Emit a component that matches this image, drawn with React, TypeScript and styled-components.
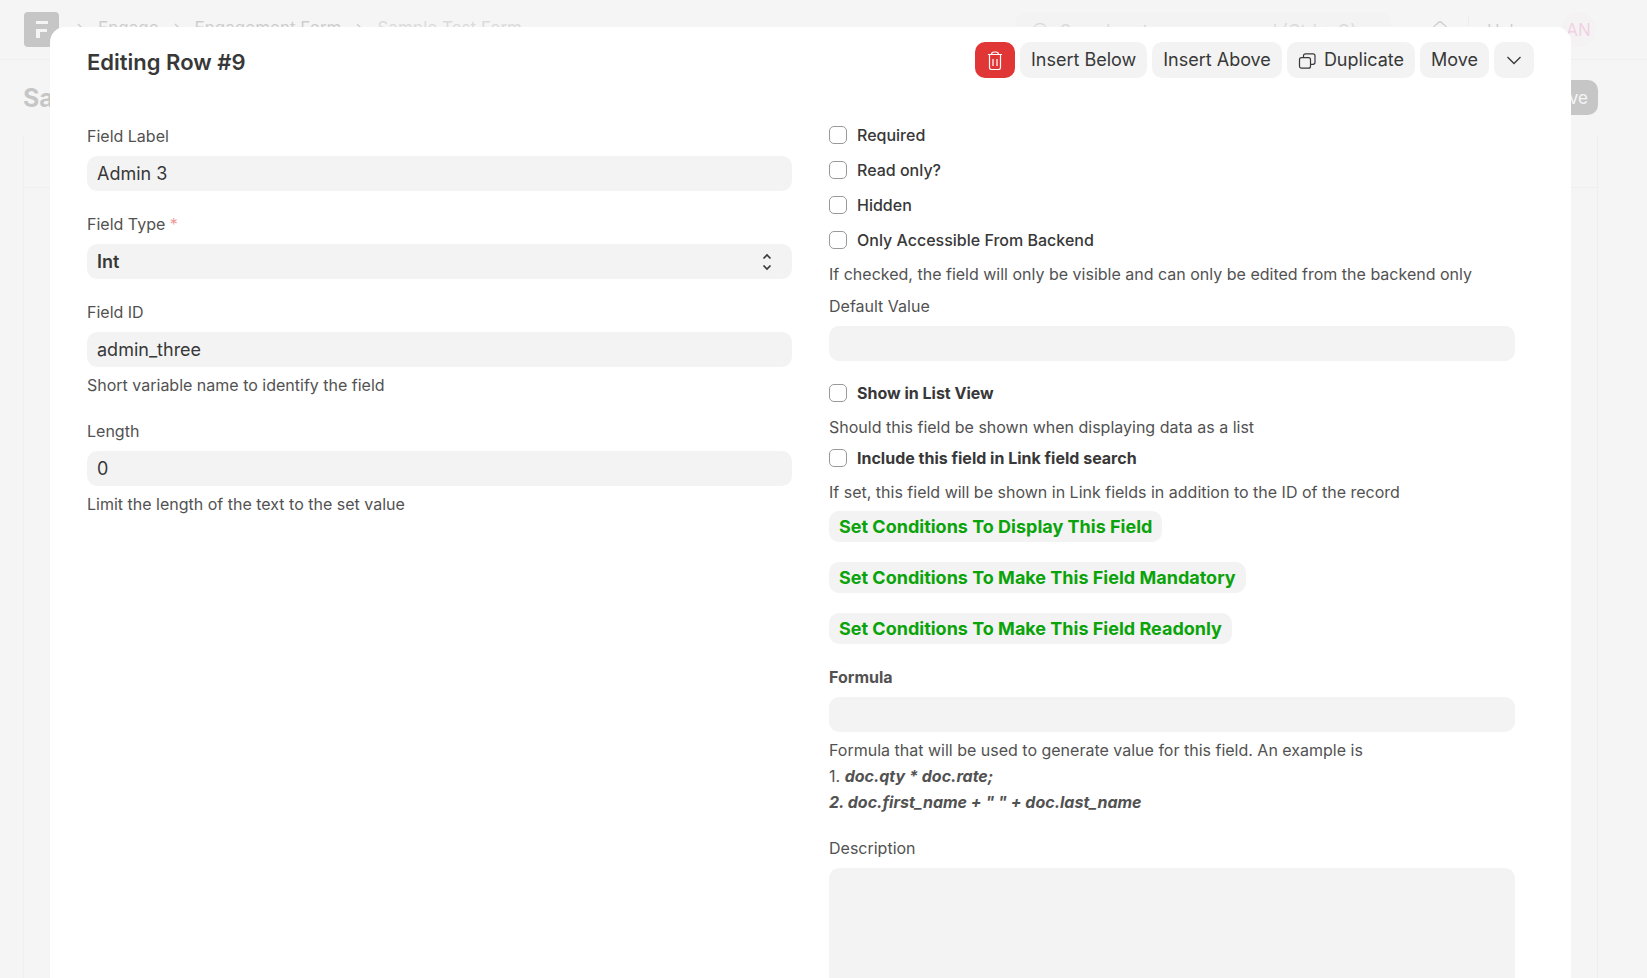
import React, { useState } from "react";
import styled, { createGlobalStyle } from "styled-components";

const GlobalStyle = createGlobalStyle`
  *, *::before, *::after { box-sizing: border-box; }
  html, body, #root { height: 100%; }
  body {
    margin: 0;
    overflow: hidden;
    background: #fff;
    color: #383838;
    font-family: Inter, "Liberation Sans", sans-serif;
    font-size: 16px;
  }
  button, input, select, textarea { font: inherit; color: inherit; }
  h1, h2, p { margin: 0; }
`;

const Desk = styled.div`
  min-height: 100%;
  display: flex;
  flex-direction: column;
`;

const Navbar = styled.header`
  height: 60px;
  padding: 0 51px 0 24px;
  display: flex;
  align-items: center;
  border-bottom: 1px solid #e2e2e2;
`;

const Logo = styled.a`
  display: flex;
  width: 35px;
  height: 35px;
`;

const Crumbs = styled.nav`
  flex: 1;
  display: flex;
  align-items: center;
  gap: 14px;
  padding: 0 0 3px 17px;
  font-size: 17px;
`;

const Crumb = styled.a<{ $current?: boolean }>`
  color: ${(p) => (p.$current ? "#7c7c7c" : "#383838")};
  text-decoration: none;
`;

const Search = styled.label`
  display: flex;
  align-items: center;
  gap: 10px;
  width: 375px;
  height: 35px;
  padding: 2px 16px 0;
  border-radius: 10px;
  background: #f3f3f3;
  color: #7c7c7c;
  font-size: 17px;
  input { flex: 1; min-width: 0; border: 0; padding: 0; background: none; }
  input::placeholder { color: #7c7c7c; opacity: 1; }
`;

const NavTools = styled.div`
  display: flex;
  align-items: center;
  gap: 18px;
  margin-left: 39px;
  font-size: 17px;
`;

const NavDivider = styled.span`
  width: 1px;
  height: 30px;
  background: #d8d8d8;
`;

const NavButton = styled.button`
  display: flex;
  align-items: center;
  gap: 8px;
  padding: 2px 0 0;
  border: 0;
  background: none;
`;

const Avatar = styled.span`
  width: 35px;
  height: 35px;
  border-radius: 50%;
  display: grid;
  place-items: center;
  background: #fcf0f4;
  color: #e34aa6;
  margin-left: 19px;
`;

const PageHead = styled.div`
  height: 75px;
  padding: 0 49px 0 23px;
  display: flex;
  align-items: center;
  justify-content: space-between;
`;

const PageTitle = styled.h1`
  font-size: 25px;
  font-weight: 700;
  color: #171717;
`;

const SaveButton = styled.button`
  height: 35px;
  padding: 0 10px;
  border: 0;
  border-radius: 10px;
  background: #171717;
  color: #fff;
  font-size: 17px;
`;

const PageForm = styled.div`
  flex: 1;
  margin: 0 49px 0 23px;
  border: solid #e2e2e2;
  border-width: 0 1px;
`;

const PageTabs = styled.div`
  height: 53px;
  border-bottom: 1px solid #e2e2e2;
`;

const Backdrop = styled.div`
  position: fixed;
  inset: 0;
  overflow: hidden;
  padding: 27px 76px 0 50px;
  background: rgba(242, 242, 242, 0.8);
`;

const Dialog = styled.section`
  min-height: 100%;
  padding: 15px 37px 37px;
  border-radius: 15px 15px 0 0;
  background: #fff;
`;

const DialogHead = styled.div`
  display: flex;
  justify-content: space-between;
  height: 81px;
`;

const DialogTitle = styled.h2`
  font-size: 22px;
  line-height: 40px;
  font-weight: 600;
`;

const Actions = styled.div`
  display: flex;
  align-items: flex-start;
  gap: 5px;
`;

const ActionButton = styled.button<{ $danger?: boolean; $icon?: boolean }>`
  display: flex;
  align-items: center;
  justify-content: center;
  gap: 6px;
  height: 36px;
  min-width: ${(p) => (p.$icon ? "40px" : "0")};
  padding: ${(p) => (p.$icon ? "0" : "0 11px 2px")};
  border: 0;
  border-radius: 10px;
  white-space: nowrap;
  font-size: 18px;
  background: ${(p) => (p.$danger ? "#e03636" : "#f3f3f3")};
  color: ${(p) => (p.$danger ? "#fff" : "#383838")};
`;

const Columns = styled.form`
  display: grid;
  grid-template-columns: 1fr 1fr;
  column-gap: 37px;
`;

const Column = styled.div<{ $inset?: boolean }>`
  min-width: 0;
  padding-right: ${(p) => (p.$inset ? "19px" : "0")};
`;

const Field = styled.div`
  display: flex;
  flex-direction: column;
  margin-bottom: 20px;
`;

const Label = styled.label<{ $bold?: boolean }>`
  margin-bottom: 7px;
  line-height: 26px;
  color: #525252;
  font-weight: ${(p) => (p.$bold ? 700 : 400)};
`;

const Mark = styled.span`
  color: #f09a9a;
`;

const TextInput = styled.input`
  height: 35px;
  width: 100%;
  padding: 0 10px;
  border: 0;
  border-radius: 10px;
  background: #f3f3f3;
  font-size: 18px;
`;

const SelectBox = styled.div`
  display: grid;
  align-items: center;
  > * { grid-area: 1 / 1; }
  svg { justify-self: end; margin-right: 20px; pointer-events: none; }
`;

const Select = styled.select`
  appearance: none;
  height: 35px;
  width: 100%;
  padding: 0 10px;
  border: 0;
  border-radius: 10px;
  background: #f3f3f3;
  font-size: 18px;
  font-weight: 600;
`;

const TextArea = styled.textarea`
  height: 375px;
  width: 100%;
  padding: 10px;
  border: 0;
  border-radius: 10px;
  resize: none;
  background: #f3f3f3;
  font-size: 18px;
`;

const Help = styled.p<{ $after?: "input" | "check" }>`
  margin-top: ${(p) => (p.$after === "check" ? "9px" : "5px")};
  line-height: 26px;
  color: #525252;
`;

const CheckField = styled.div<{ $gap: number }>`
  margin-bottom: ${(p) => p.$gap}px;
`;

const CheckLabel = styled.label<{ $bold?: boolean }>`
  display: flex;
  align-items: center;
  gap: 10px;
  line-height: 24px;
  font-weight: ${(p) => (p.$bold ? 700 : 500)};
`;

const CheckBox = styled.input`
  appearance: none;
  width: 18px;
  height: 18px;
  margin: 0;
  border: 1px solid #999;
  border-radius: 5px;
  background: #fff;
  &:checked { background: #171717; }
`;

const Conditions = styled.div`
  display: flex;
  flex-direction: column;
  align-items: flex-start;
  gap: 20px;
  margin-bottom: 20px;
`;

const ConditionButton = styled.button`
  height: 31px;
  padding: 0 10px;
  border: 0;
  border-radius: 10px;
  background: #f3f3f3;
  color: #0aa30a;
  font-size: 18px;
  font-weight: 700;
`;

const Chevron = () => (
  <svg width="8" height="12" viewBox="0 0 8 12" fill="none" stroke="#383838" strokeWidth="1.3">
    <path d="M2 2l4 4-4 4" />
  </svg>
);

type CheckProps = { id: string; label: string; bold?: boolean; help?: string; gap: number };

const Check = ({ id, label, bold, help, gap }: CheckProps) => (
  <CheckField $gap={gap}>
    <CheckLabel $bold={bold} htmlFor={id}>
      <CheckBox type="checkbox" id={id} />
      {label}
    </CheckLabel>
    {help && <Help $after="check">{help}</Help>}
  </CheckField>
);

type InputProps = { id: string; label: string; value?: string; bold?: boolean; children?: React.ReactNode };

const InputField = ({ id, label, value = "", bold, children }: InputProps) => (
  <Field>
    <Label htmlFor={id} $bold={bold}>{label}</Label>
    <TextInput id={id} type="text" defaultValue={value} />
    {children && <Help>{children}</Help>}
  </Field>
);

const conditions = [
  "Set Conditions To Display This Field",
  "Set Conditions To Make This Field Mandatory",
  "Set Conditions To Make This Field Readonly",
];

export default function App() {
  const [type, setType] = useState("Int");
  return (
    <>
      <GlobalStyle />
      <Desk>
        <Navbar>
          <Logo href="#" aria-label="Home">
            <svg width="35" height="35" viewBox="0 0 35 35">
              <rect width="35" height="35" rx="4" fill="#171717" />
              <path d="M12 9h12v3H12zM12 17h11v3h-7v6h-4z" fill="#fff" />
            </svg>
          </Logo>
          <Crumbs>
            <Chevron />
            <Crumb href="#">Engage</Crumb>
            <Chevron />
            <Crumb href="#">Engagement Form</Crumb>
            <Chevron />
            <Crumb href="#" $current>Sample Test Form</Crumb>
          </Crumbs>
          <Search>
            <svg width="18" height="18" viewBox="0 0 18 18" fill="none" stroke="currentColor" strokeWidth="1.3">
              <circle cx="8" cy="8" r="6.5" />
              <path d="M13 13l4 4" />
            </svg>
            <input type="text" aria-label="Search" placeholder="Search or type a command (Ctrl + G)" />
          </Search>
          <NavTools>
            <NavButton aria-label="Notifications">
              <svg width="20" height="20" viewBox="0 0 20 20" fill="none" stroke="#383838" strokeWidth="1.3">
                <path d="M3 15V9q0-4 4-6q1-2 3-2t3 2q4 2 4 6v6zM8 18h4" />
              </svg>
            </NavButton>
            <NavDivider />
            <NavButton>Help</NavButton>
            <Avatar>AN</Avatar>
          </NavTools>
        </Navbar>
        <PageHead>
          <PageTitle>Sample Test Form</PageTitle>
          <SaveButton>Save</SaveButton>
        </PageHead>
        <PageForm>
          <PageTabs />
        </PageForm>
      </Desk>
      <Backdrop>
        <Dialog role="dialog" aria-labelledby="dialog-title">
          <DialogHead>
            <DialogTitle id="dialog-title">Editing Row #9</DialogTitle>
            <Actions>
              <ActionButton $danger $icon aria-label="Delete">
                <svg width="16" height="20" viewBox="0 0 16 20" fill="none" stroke="currentColor" strokeWidth="1.2">
                  <path d="M1 4.500h14M2.500 4.500v13q0 2 2 2h7q2 0 2-2v-13M4.500 4.500q0-2.500 2.500-2.500h2q2.500 0 2.500 2.500M6 9v7M10 9v7" />
                </svg>
              </ActionButton>
              <ActionButton>Insert Below</ActionButton>
              <ActionButton>Insert Above</ActionButton>
              <ActionButton>
                <svg width="20" height="20" viewBox="0 0 20 20" fill="none" stroke="currentColor" strokeWidth="1.2">
                  <rect x="1.500" y="8.700" width="11" height="10.500" rx="2" />
                  <path d="M5.500 8.700V6.800q0-2 2-2h7.500q2 0 2 2v6.500q0 2-2 2h-2.500" />
                </svg>
                Duplicate
              </ActionButton>
              <ActionButton>Move</ActionButton>
              <ActionButton $icon aria-label="Collapse">
                <svg width="16" height="16" viewBox="0 0 16 16" fill="none" stroke="currentColor" strokeWidth="1.3">
                  <path d="M1.500 5l6.500 6.500L14.500 5" />
                </svg>
              </ActionButton>
            </Actions>
          </DialogHead>
          <Columns>
            <Column>
              <InputField id="label" label="Field Label" value="Admin 3" />
              <Field>
                <Label htmlFor="type">Field Type <Mark>*</Mark></Label>
                <SelectBox>
                  <Select id="type" value={type} onChange={(e) => setType(e.target.value)}>
                    <option>Int</option>
                    <option>Data</option>
                  </Select>
                  <svg width="10" height="18" viewBox="0 0 10 18" fill="none" stroke="#383838" strokeWidth="1.7">
                    <path d="M1.500 5.500L5 2l3.500 3.500M1.500 12.500L5 16l3.500-3.500" />
                  </svg>
                </SelectBox>
              </Field>
              <InputField id="field-id" label="Field ID" value="admin_three">
                Short variable name to identify the field
              </InputField>
              <InputField id="length" label="Length" value="0">
                Limit the length of the text to the set value
              </InputField>
            </Column>
            <Column $inset>
              <Check id="required" label="Required" gap={11} />
              <Check id="read-only" label="Read only?" gap={11} />
              <Check id="hidden" label="Hidden" gap={11} />
              <Check
                id="backend"
                label="Only Accessible From Backend"
                help="If checked, the field will only be visible and can only be edited from the backend only"
                gap={6}
              />
              <InputField id="default" label="Default Value" />
              <Check
                id="list-view"
                bold
                label="Show in List View"
                help="Should this field be shown when displaying data as a list"
                gap={6}
              />
              <Check
                id="link-search"
                bold
                label="Include this field in Link field search"
                help="If set, this field will be shown in Link fields in addition to the ID of the record"
                gap={6}
              />
              <Conditions>
                {conditions.map((c) => (
                  <ConditionButton type="button" key={c}>{c}</ConditionButton>
                ))}
              </Conditions>
              <InputField id="formula" label="Formula" bold>
                Formula that will be used to generate value for this field. An example is
                <br />
                1. <strong><em>doc.qty * doc.rate;<br />2. doc.first_name + " " + doc.last_name</em></strong>
              </InputField>
              <Field>
                <Label htmlFor="description">Description</Label>
                <TextArea id="description" />
              </Field>
            </Column>
          </Columns>
        </Dialog>
      </Backdrop>
    </>
  );
}
